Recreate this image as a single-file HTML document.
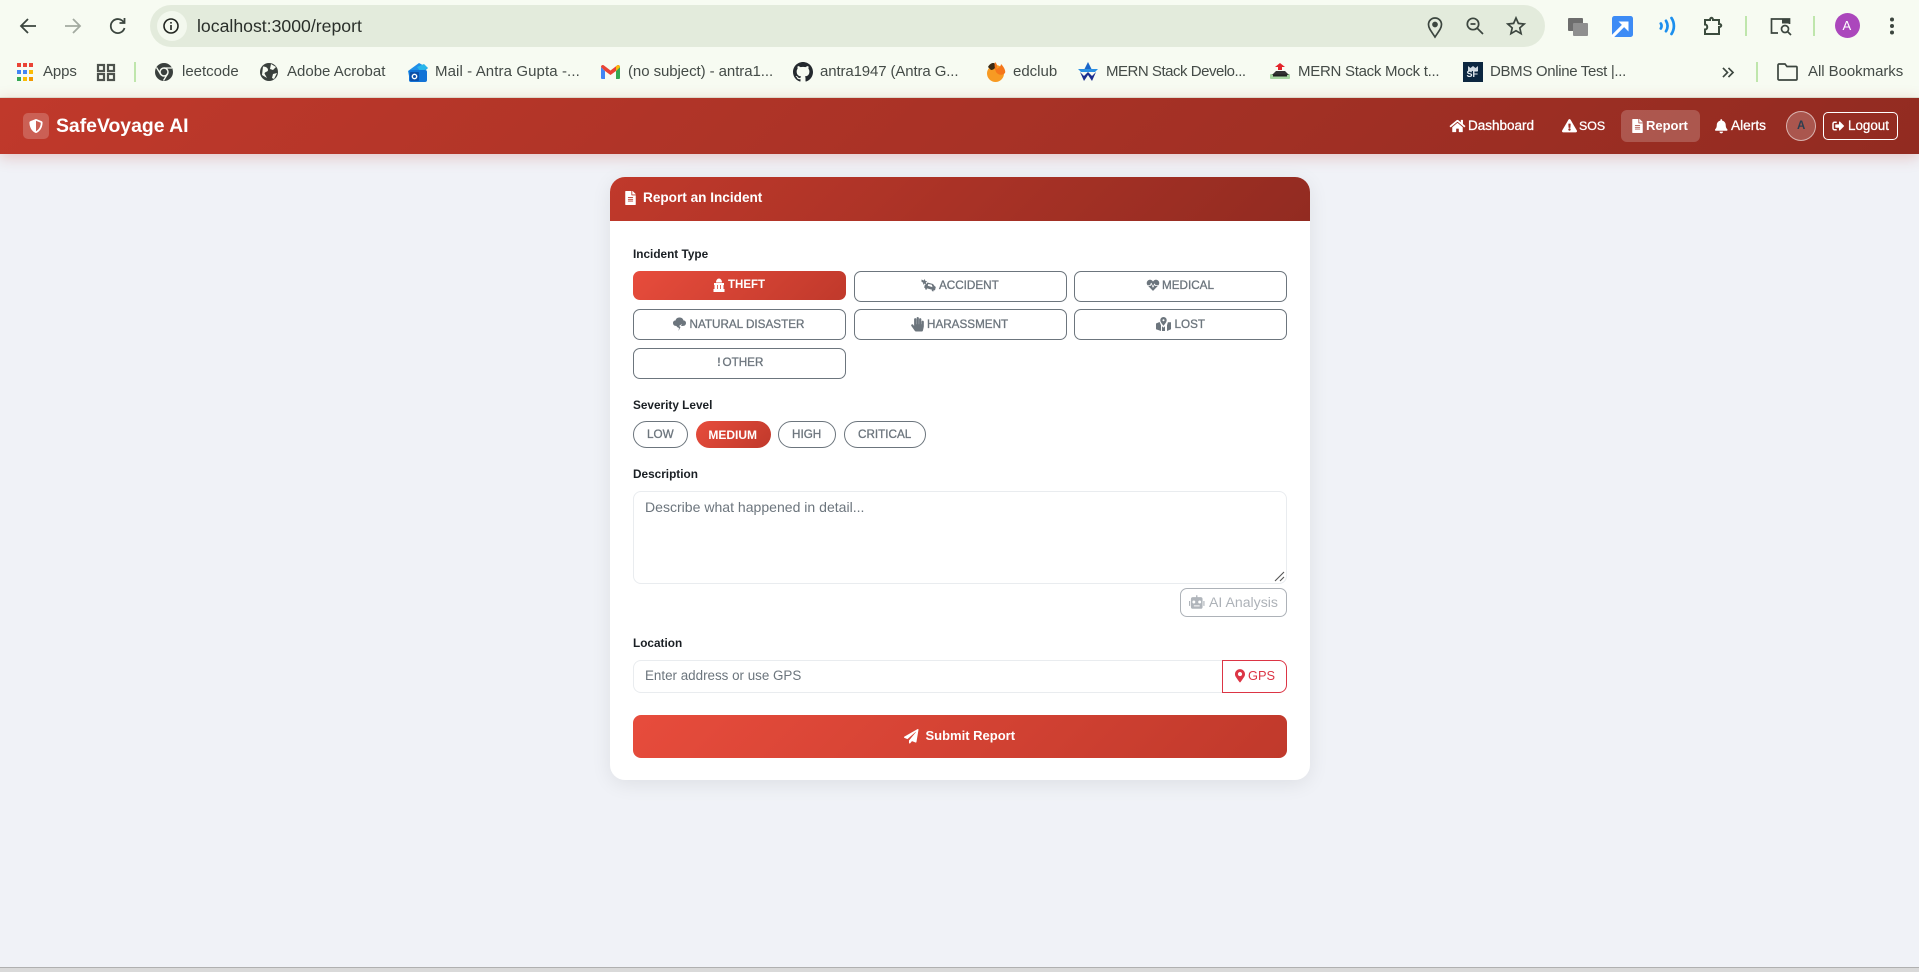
<!DOCTYPE html>
<html lang="en"><head><meta charset="utf-8"><title>SafeVoyage AI - Report</title>
<style>
*{box-sizing:border-box;margin:0;padding:0}
html,body{width:1919px;height:972px;overflow:hidden;background:#f0f2f7;font-family:"Liberation Sans",sans-serif}
.a,.t,svg.i{position:absolute}
.t{white-space:nowrap;height:20px;line-height:20px}
svg.i{display:block;overflow:visible}
.bm{font-size:15px;color:#444b47;top:62px}
#chrome{position:absolute;left:0;top:0;width:1919px;height:98px;background:#f7fbf2;border-bottom:1px solid #dfe6d8}
#omni{left:150px;top:5px;width:1395px;height:42px;border-radius:21px;background:#e3ebdc}
#nav{position:absolute;left:0;top:98px;width:1919px;height:56px;background:linear-gradient(135deg,#c0392b,#922b21);box-shadow:0 3px 14px rgba(192,57,43,.25)}
.n{color:#fff;font-size:13.5px;-webkit-text-stroke:.3px #fff}
#card{position:absolute;left:610px;top:177px;width:700px;height:603px;background:#fff;border-radius:15px;box-shadow:0 4px 20px rgba(0,0,0,.08)}
#ch{position:absolute;left:610px;top:177px;width:700px;height:44px;border-radius:15px 15px 0 0;background:linear-gradient(135deg,#c0392b,#922b21)}
.lb{font-size:11.8px;font-weight:bold;color:#1a1f24}
.b{position:absolute;border:1.5px solid #6c757d;background:#fff;border-radius:7px;width:213px;height:31px}
.bt{font-size:11.7px;color:#6c757d;-webkit-text-stroke:.3px #6c757d}
.p{position:absolute;top:421px;height:27px;border:1.2px solid #6c757d;border-radius:14px;background:#fff}
.act{background:linear-gradient(135deg,#e74c3c,#c0392b);border:0}
.ph{font-size:14.05px;color:#6c757d}
</style></head><body>

<div id="chrome"></div>
<div class="a" id="omni"></div>
<div class="a" style="left:157px;top:11px;width:30px;height:30px;border-radius:50%;background:#f3f8ee"></div>

<!-- toolbar left -->
<svg class="i" style="left:19px;top:17px" width="18" height="18" viewBox="0 0 18 18" fill="none" stroke="#3c463f" stroke-width="1.8"><path d="M17 9H2M9 2 2 9l7 7"/></svg>
<svg class="i" style="left:64px;top:17px" width="18" height="18" viewBox="0 0 18 18" fill="none" stroke="#a3aaa0" stroke-width="1.8"><path d="M1 9h15M9 2l7 7-7 7"/></svg>
<svg class="i" style="left:109px;top:17px" width="18" height="18" viewBox="0 0 18 18" fill="none" stroke="#3c463f" stroke-width="1.8"><path d="M15.500 11a7 7 0 1 1-.7-5.500"/><path d="M15.500 1v5h-5"/></svg>
<svg class="i" style="left:163px;top:18px" width="16" height="16" viewBox="0 0 16 16" fill="none" stroke="#20241f" stroke-width="1.6"><circle cx="8" cy="8" r="7"/><path d="M8 7v5M8 4v1.600"/></svg>
<span class="t" style="left:197px;top:16px;font-size:17.67px;color:#2a2f2a">localhost:3000/report</span>

<!-- toolbar right -->
<svg class="i" style="left:1427px;top:17px" width="16" height="21" viewBox="0 0 16 21" fill="none" stroke="#3c463f" stroke-width="1.7"><path d="M8 20C4 14 1.500 11 1.500 7.500a6.500 6.500 0 0 1 13 0C14.500 11 12 14 8 20z"/><circle cx="8" cy="7.500" r="2" fill="#3c463f"/></svg>
<svg class="i" style="left:1466px;top:17px" width="18" height="18" viewBox="0 0 18 18" fill="none" stroke="#3c463f" stroke-width="1.7"><circle cx="7" cy="7" r="5.700"/><path d="M4.500 7h5M11 11l6 6"/></svg>
<svg class="i" style="left:1506px;top:16px" width="20" height="20" viewBox="0 0 20 20" fill="none" stroke="#3c463f" stroke-width="1.7"><path d="M10 2l2.400 5.400 5.800.6-4.400 3.900 1.300 5.800L10 14.700l-5.100 3 1.300-5.800L1.800 8l5.800-.6z"/></svg>
<svg class="i" style="left:1568px;top:17px" width="20" height="20" viewBox="0 0 20 20"><rect x="0" y="1" width="15" height="13" rx="1" fill="#6d6d6d"/><rect x="5" y="6" width="15" height="13" rx="1" fill="#8f8f8f"/></svg>
<svg class="i" style="left:1612px;top:16px" width="21" height="21" viewBox="0 0 21 21"><rect width="21" height="21" rx="2.500" fill="#3d8bf5"/><path d="M0 21 14 7" stroke="#fff" stroke-width="3.200"/><path d="M6.500 5.500h10v10z" fill="#fff"/></svg>
<svg class="i" style="left:1659px;top:16px" width="17" height="20" viewBox="0 0 17 20" fill="none" stroke="#1c8fee" stroke-width="2.700" stroke-linecap="round"><path d="M1.800 7.500c1 1.600 1 3.400 0 5M7 4.800c2 3.300 2 7.100 0 10.400M12.500 2c3.200 5 3.200 11 0 16"/></svg>
<svg class="i" style="left:1703px;top:15px" width="20" height="21" viewBox="0 0 20 21" fill="none" stroke="#3c4c3e" stroke-width="2"><path d="M2 5h5c0-3 3-3 3 0h6v4c3 0 3 3 0 3v7H2v-4.500c3 0 3-5 0-5z"/></svg>
<div class="a" style="left:1745px;top:16px;width:2px;height:20px;background:#bfe6ac"></div>
<svg class="i" style="left:1770px;top:17px" width="22" height="20" viewBox="0 0 22 20" fill="none" stroke="#3c463f" stroke-width="1.700"><path d="M8 16H1.500V2h18v5"/><rect x="12" y="1.500" width="8" height="5" fill="#3c463f" stroke="none"/><circle cx="15" cy="12" r="3.500"/><path d="M17.500 14.500l3.500 3.500"/></svg>
<div class="a" style="left:1813px;top:16px;width:2px;height:20px;background:#bfe6ac"></div>
<div class="a" style="left:1835px;top:13px;width:25px;height:25px;border-radius:50%;background:#ab47bc"></div>
<span class="t" style="left:1842.500px;top:15.500px;font-size:13px;color:#fff">A</span>
<svg class="i" style="left:1889px;top:17px" width="6" height="18" viewBox="0 0 6 18" fill="#3c463f"><circle cx="3" cy="2.500" r="2"/><circle cx="3" cy="9" r="2"/><circle cx="3" cy="15.500" r="2"/></svg>

<!-- bookmarks -->
<svg class="i" style="left:17px;top:63px" width="16" height="18" viewBox="0 0 16 18"><g fill="#ea4335"><rect width="4" height="4"/><rect x="6" width="4" height="4"/><rect x="12" width="4" height="4"/></g><g fill="#4285f4"><rect y="7" width="4" height="4"/><rect x="6" y="7" width="4" height="4"/></g><rect x="12" y="7" width="4" height="4" fill="#fbbc05"/><rect y="14" width="4" height="4" fill="#34a853"/><rect x="6" y="14" width="4" height="4" fill="#fbbc05"/><rect x="12" y="14" width="4" height="4" fill="#f29900"/></svg>
<span class="t bm" style="left:43px;letter-spacing:-.1px">Apps</span>
<svg class="i" style="left:97px;top:64px" width="18" height="17" viewBox="0 0 18 17" fill="none" stroke="#4d524d" stroke-width="2.200"><rect x="1" y="1" width="6" height="6"/><rect x="11" y="1" width="6" height="6"/><rect x="1" y="10" width="6" height="6"/><rect x="11" y="10" width="6" height="6"/></svg>
<div class="a" style="left:134px;top:62px;width:2px;height:20px;background:#bfe6ac"></div>
<svg class="i" style="left:155px;top:63px" width="18" height="18" viewBox="0 0 18 18"><circle cx="9" cy="9" r="9" fill="#3a403d"/><circle cx="9" cy="9" r="4" fill="#3a403d" stroke="#f7fbf2" stroke-width="1.500"/><path d="M9 5h8M5.500 11 1.500 4.500M12.500 11 8.500 17.500" stroke="#f7fbf2" stroke-width="1.300"/></svg>
<span class="t bm" style="left:182px">leetcode</span>
<svg class="i" style="left:260px;top:63px" width="18" height="18" viewBox="0 0 18 18"><circle cx="9" cy="9" r="9" fill="#3a403d"/><path d="M3 3.500c3 0 5 1.500 5 3.500s-3 1.500-3.500 3.500L7 15 2 12zM11 1l5 3-3 3-3-1zM17 10l-3 6-2-1 1-4z" fill="#f7fbf2"/></svg>
<span class="t bm" style="left:287px">Adobe Acrobat</span>
<svg class="i" style="left:408px;top:62px" width="20" height="20" viewBox="0 0 20 20"><path d="M0 9 11 1l9 5-9 8H1z" fill="#1f8fe8"/><path d="M9 5l7-3 4 4-7 4z" fill="#28b5ea"/><rect x="1" y="8" width="18" height="12" rx="2" fill="#1273d6"/><rect x="2" y="10" width="9" height="9" rx="1" fill="#0c4fa8"/><circle cx="6.500" cy="14.500" r="2.200" fill="none" stroke="#fff" stroke-width="1.400"/></svg>
<span class="t bm" style="left:435px;letter-spacing:.1px">Mail - Antra Gupta -...</span>
<svg class="i" style="left:601px;top:65px" width="19" height="14" viewBox="0 0 19 14"><path d="M0 2v11a1 1 0 0 0 1 1h3V6z" fill="#4285f4"/><path d="M15 6v8h3a1 1 0 0 0 1-1V2z" fill="#34a853"/><path d="M0 2c0-2 2-2.500 3-1.500L9.500 5.500 16 .5c1-1 3-.5 3 1.500l-4 4-5.500 4L4 6z" fill="#ea4335"/><path d="M15 6l4-4c0-1.500-2-2.500-3-1.500L15 1.500z" fill="#fbbc05"/></svg>
<span class="t bm" style="left:628px;letter-spacing:-.07px">(no subject) - antra1...</span>
<svg class="i" style="left:793px;top:62px" width="20" height="20" viewBox="0 0 16 16"><path fill="#24292e" d="M8 0C3.580 0 0 3.580 0 8c0 3.540 2.290 6.530 5.470 7.590.4.070.55-.17.55-.38 0-.19-.01-.82-.01-1.490-2.010.37-2.530-.49-2.690-.94-.09-.23-.48-.94-.82-1.130-.28-.15-.68-.52-.01-.53.630-.01 1.080.58 1.230.82.720 1.210 1.870.870 2.330.660.070-.52.280-.870.510-1.070-1.780-.2-3.640-.89-3.640-3.950 0-.870.310-1.590.820-2.150-.080-.2-.360-1.020.080-2.120 0 0 .67-.210 2.200.820.640-.180 1.320-.270 2-.270s1.360.090 2 .270c1.530-1.040 2.200-.820 2.200-.820.440 1.100.160 1.920.080 2.120.510.560.820 1.270.820 2.150 0 3.070-1.870 3.750-3.650 3.950.290.250.540.730.540 1.480 0 1.070-.010 1.930-.010 2.200 0 .210.150.460.550.380A8.010 8.010 0 0 0 16 8c0-4.420-3.580-8-8-8z"/></svg>
<span class="t bm" style="left:820px;letter-spacing:-.12px">antra1947 (Antra G...</span>
<svg class="i" style="left:986px;top:62px" width="20" height="20" viewBox="0 0 20 20"><circle cx="9.500" cy="11.500" r="8.500" fill="#f79a23"/><path d="M2 5c2-4 6-5 7-3 2 3-1 6-4 6z" fill="#3a2a14"/><path d="M9 0c2 2 3 4 1 7 3-1 5-3 5-5 3 3 5 7 4 9-3 3-7 2-9-1-1-3-2-7-1-10z" fill="#f5761a"/></svg>
<span class="t bm" style="left:1013px">edclub</span>
<svg class="i" style="left:1078px;top:62px" width="20" height="20" viewBox="0 0 20 20" fill="none"><path d="M10 0 6.500 7h7z" fill="#1a66c9"/><path d="M0 7h20l-3 3H3z" fill="#2a8fe3"/><path d="M2 10l4 9 4-6 4 6 4-9-4 4-4-4-4 4z" fill="#1b2d8f"/></svg>
<span class="t bm" style="left:1106px;letter-spacing:-.48px">MERN Stack Develo...</span>
<svg class="i" style="left:1270px;top:63px" width="20" height="17" viewBox="0 0 20 17"><rect x="0" y="11" width="20" height="5" rx="1" fill="#a7d7a1"/><path d="M2 12l4-4h9l4 4z" fill="#333"/><path d="M8 7V4H5l5-4 5 4h-3v3z" fill="#e3242b"/><rect x="3" y="11.500" width="14" height="2" fill="#222"/></svg>
<span class="t bm" style="left:1298px;letter-spacing:-.27px">MERN Stack Mock t...</span>
<div class="a" style="left:1463px;top:62px;width:20px;height:20px;background:#0c2740"></div>
<svg class="i" style="left:1463px;top:62px" width="20" height="20" viewBox="0 0 20 20"><path d="M5 9V4l2.500 2L10 4l2.500 2L15 4v5z" fill="#cfd8df"/></svg>
<span class="t" style="left:1466.500px;top:63.500px;font-size:9px;color:#e6edf2;font-weight:bold">SF</span>
<span class="t bm" style="left:1490px;letter-spacing:-.33px">DBMS Online Test |...</span>
<svg class="i" style="left:1722px;top:67px" width="12" height="11" viewBox="0 0 13 12" fill="none" stroke="#3c463f" stroke-width="1.800"><path d="M1 1l5 5-5 5M7 1l5 5-5 5"/></svg>
<div class="a" style="left:1756px;top:62px;width:2px;height:20px;background:#bfe6ac"></div>
<svg class="i" style="left:1777px;top:63px" width="21" height="18" viewBox="0 0 21 18" fill="none" stroke="#3c463f" stroke-width="1.700"><path d="M1 2a1 1 0 0 1 1-1h6l2 2.500h9a1 1 0 0 1 1 1V16a1 1 0 0 1-1 1H2a1 1 0 0 1-1-1z"/></svg>
<span class="t bm" style="left:1808px;letter-spacing:-.05px">All Bookmarks</span>

<!-- app navbar -->
<div id="nav"></div>
<div class="a" style="left:23px;top:113px;width:26px;height:26px;border-radius:5px;background:rgba(255,255,255,.2)"></div>
<svg class="i" style="left:29px;top:119px" width="14" height="14" viewBox="0 0 512 512" fill="#fff"><path d="M466.500 83.700l-192-80a48.150 48.150 0 0 0-36.900 0l-192 80C27.700 91.100 16 108.600 16 128c0 198.500 114.500 335.700 221.500 380.300 11.800 4.900 25.100 4.900 36.900 0C360.100 472.600 496 349.300 496 128c0-19.400-11.700-36.900-29.500-44.300zM256.100 446.300l-.1-381 175.900 73.300c-3.300 151.400-82.100 261.100-175.800 307.700z"/></svg>
<span class="t" style="left:56px;top:116px;font-size:19.400px;font-weight:bold;color:#fff">SafeVoyage AI</span>

<svg class="i" style="left:1449px;top:119px" width="17" height="14" viewBox="0 0 576 512" fill="#fff"><path d="M280.370 148.260L96 300.110V464a16 16 0 0 0 16 16l112.060-.29a16 16 0 0 0 15.920-16V368a16 16 0 0 1 16-16h64a16 16 0 0 1 16 16v95.640a16 16 0 0 0 16 16.050L464 480a16 16 0 0 0 16-16V300L295.670 148.260a12.190 12.190 0 0 0-15.300 0zM571.600 251.470L488 182.560V44.050a12 12 0 0 0-12-12h-56a12 12 0 0 0-12 12v72.610L318.470 43a48 48 0 0 0-61 0L4.340 251.470a12 12 0 0 0-1.600 16.900l25.500 31A12 12 0 0 0 45.150 301l235.220-193.740a12.190 12.190 0 0 1 15.300 0L530.900 301a12 12 0 0 0 16.900-1.600l25.500-31a12 12 0 0 0-1.700-16.930z"/></svg>
<span class="t n" style="left:1468px;top:116px">Dashboard</span>
<svg class="i" style="left:1562px;top:119px" width="15" height="13.500" viewBox="0 0 576 512" fill="#fff"><path d="M569.517 440.013C587.975 472.007 564.806 512 527.940 512H48.054c-36.937 0-59.999-40.055-41.577-71.987L246.423 23.985c18.467-32.009 64.720-31.951 83.154 0l239.940 416.028zM288 354c-25.405 0-46 20.595-46 46s20.595 46 46 46 46-20.595 46-46-20.595-46-46-46zm-43.673-165.346l7.418 136c.347 6.364 5.609 11.346 11.982 11.346h48.546c6.373 0 11.635-4.982 11.982-11.346l7.418-136c.375-6.874-5.098-12.654-11.982-12.654h-63.383c-6.884 0-12.356 5.780-11.981 12.654z"/></svg>
<span class="t n" style="left:1579px;top:116px;font-size:12.400px">SOS</span>
<div class="a" style="left:1621px;top:110px;width:79px;height:32px;border-radius:6px;background:rgba(255,255,255,.2)"></div>
<svg class="i" style="left:1632px;top:119px" width="11" height="14" viewBox="0 0 384 512" fill="#fff"><path d="M224 136V0H24C10.700 0 0 10.700 0 24v464c0 13.300 10.700 24 24 24h336c13.300 0 24-10.700 24-24V160H248c-13.200 0-24-10.800-24-24zm64 236c0 6.600-5.400 12-12 12H108c-6.600 0-12-5.400-12-12v-8c0-6.600 5.400-12 12-12h168c6.600 0 12 5.400 12 12v8zm0-64c0 6.600-5.400 12-12 12H108c-6.600 0-12-5.400-12-12v-8c0-6.600 5.400-12 12-12h168c6.600 0 12 5.400 12 12v8zm0-72v8c0 6.600-5.400 12-12 12H108c-6.600 0-12-5.400-12-12v-8c0-6.600 5.400-12 12-12h168c6.600 0 12 5.400 12 12zm96-114.100v6.100H256V0h6.100c6.400 0 12.500 2.500 17 7l97.900 98c4.500 4.500 7 10.600 7 16.900z"/></svg>
<span class="t" style="left:1646px;top:116px;font-size:13px;font-weight:bold;color:#fff">Report</span>
<svg class="i" style="left:1715px;top:119px" width="12.500" height="14.500" viewBox="0 0 448 512" fill="#fff"><path d="M224 512c35.320 0 63.970-28.650 63.970-64H160.030c0 35.350 28.650 64 63.970 64zm215.390-149.710c-19.320-20.760-55.470-51.990-55.470-154.290 0-77.700-54.480-139.900-127.940-155.160V32c0-17.670-14.320-32-31.980-32s-31.980 14.330-31.980 32v20.840C118.560 68.100 64.080 130.300 64.080 208c0 102.300-36.150 133.530-55.470 154.290-6 6.450-8.660 14.160-8.610 21.710.11 16.400 12.980 32 32.100 32h383.800c19.120 0 32-15.600 32.100-32 .05-7.550-2.610-15.270-8.610-21.710z"/></svg>
<span class="t n" style="left:1731px;top:116px;font-size:13.700px">Alerts</span>
<div class="a" style="left:1786px;top:111px;width:30px;height:30px;border-radius:50%;background:rgba(255,255,255,.2);border:1px solid rgba(255,255,255,.55)"></div>
<span class="t" style="left:1797px;top:116px;font-size:11.500px;font-weight:bold;color:#2c3e50">A</span>
<div class="a" style="left:1823px;top:112px;width:75px;height:28px;border-radius:5px;border:1.500px solid #fff"></div>
<svg class="i" style="left:1832px;top:120px" width="12.500" height="12" viewBox="0 0 512 512" fill="#fff"><path d="M497 273L329 441c-15 15-41 4.500-41-17v-96H152c-13.300 0-24-10.700-24-24v-96c0-13.300 10.700-24 24-24h136V88c0-21.400 25.900-32 41-17l168 168c9.300 9.400 9.300 24.600 0 34zM192 436v-40c0-6.600-5.400-12-12-12H96c-17.700 0-32-14.300-32-32V160c0-17.700 14.300-32 32-32h84c6.600 0 12-5.400 12-12V76c0-6.600-5.400-12-12-12H96c-53 0-96 43-96 96v192c0 53 43 96 96 96h84c6.600 0 12-5.400 12-12z"/></svg>
<span class="t n" style="left:1848px;top:116px;font-size:13.400px">Logout</span>

<!-- card -->
<div id="card"></div>
<div id="ch"></div>
<svg class="i" style="left:625px;top:191px" width="11" height="14" viewBox="0 0 384 512" fill="#fff"><path d="M224 136V0H24C10.700 0 0 10.700 0 24v464c0 13.300 10.700 24 24 24h336c13.300 0 24-10.700 24-24V160H248c-13.200 0-24-10.800-24-24zm64 236c0 6.600-5.400 12-12 12H108c-6.600 0-12-5.400-12-12v-8c0-6.600 5.400-12 12-12h168c6.600 0 12 5.400 12 12v8zm0-64c0 6.600-5.400 12-12 12H108c-6.600 0-12-5.400-12-12v-8c0-6.600 5.400-12 12-12h168c6.600 0 12 5.400 12 12v8zm0-72v8c0 6.600-5.400 12-12 12H108c-6.600 0-12-5.400-12-12v-8c0-6.600 5.400-12 12-12h168c6.600 0 12 5.400 12 12zm96-114.100v6.100H256V0h6.100c6.400 0 12.500 2.500 17 7l97.900 98c4.500 4.500 7 10.600 7 16.900z"/></svg>
<span class="t" style="left:643px;top:188px;font-size:13.600px;font-weight:bold;color:#fff">Report an Incident</span>

<span class="t lb" style="left:633px;top:244px">Incident Type</span>
<div class="a act" style="left:633px;top:271px;width:213px;height:29px;border-radius:7px"></div>
<svg class="i" style="left:713px;top:278px" width="12" height="14" viewBox="0 0 12 14" fill="#fff"><path d="M3 4.500C3 2 4.500.5 6 .5S9 2 9 4.500zM1 5h10v2H1zM1.500 7h2.500v4.500H1.500zM4.800 7h2.400v4.500H4.800zM8 7h2.500v4.500H8zM.5 11h11v3H.5z"/></svg>
<span class="t" style="left:728px;top:275px;font-size:11.500px;font-weight:bold;color:#fff">THEFT</span>

<div class="b" style="left:853.500px;top:271px"></div>
<svg class="i" style="left:921px;top:279px" width="15" height="13" viewBox="0 0 15 13" fill="#6c757d"><path d="M.5.5l2.200 1L3.800 0l.6 2 1.800.3L4.800 3.600l.5 1.600-1.700-.6L2 5.800l.2-2L.5 2.800z"/><path d="M6.500 3.500l5.500 1.500 1.500 2 1.300 1-.8 3.400-1.300-.3-.3 1.400-1.700-.5.3-1.300-5-1.300-.3 1.300L4 10.300l.3-1.300-1.200-.4.800-3 1.500-.6zM7.300 5 6.700 6.800l4.800 1.300-.7-2.300z" fill-rule="evenodd"/></svg>
<span class="t bt" style="left:939px;top:276px">ACCIDENT</span>
<div class="b" style="left:1074px;top:271px"></div>
<svg class="i" style="left:1146px;top:279px" width="14" height="12.500" viewBox="0 0 512 512" fill="#6c757d"><path d="M320.200 243.800l-49.700 99.400c-6 12.100-23.400 11.700-28.900-.6l-56.900-126.300-30 71.700H60.600l182.500 186.500c7.100 7.300 18.600 7.300 25.700 0L451.400 288H342.300l-22.100-44.200zM473.700 73.900l-2.400-2.500c-51.500-52.600-135.800-52.600-187.400 0L256 100l-27.900-28.500c-51.500-52.700-135.900-52.700-187.400 0l-2.400 2.400C-10.400 123.700-12.500 203 31 256h102.400l35.900-86.200c5.400-12.900 23.600-13.200 29.400-.4l58.200 129.300 49-97.900c5.900-11.800 22.700-11.800 28.600 0l27.600 55.200H481c43.500-53 41.400-132.300-7.300-182.100z"/></svg>
<span class="t bt" style="left:1162px;top:276px">MEDICAL</span>

<div class="b" style="left:633px;top:309px"></div>
<svg class="i" style="left:673px;top:316.500px" width="13" height="14" viewBox="0 0 13 14" fill="#6c757d"><path d="M3.500 9C1 9 0 7.500 0 6s1-2.500 2.500-2.500C3 1.500 4.500.5 6.500.5S10 1.500 10.500 3.500C12 3.500 13 4.500 13 6s-1 3-3.500 3H8L9 7 6 9 7.500 10 5.500 14 6 11 4 10z"/></svg>
<span class="t bt" style="left:689.500px;top:314.500px">NATURAL DISASTER</span>
<div class="b" style="left:853.500px;top:309px"></div>
<svg class="i" style="left:911px;top:317px" width="13" height="14.500" viewBox="0 0 448 512" fill="#6c757d"><path d="M408.781 128.007C386.356 127.578 368 146.360 368 168.790V256h-8V79.790c0-22.430-18.356-41.212-40.781-40.783C297.488 39.423 280 57.169 280 79v177h-8V40.790C272 18.360 253.644-.422 231.219.007 209.488.423 192 18.169 192 40v216h-8V80.790c0-22.430-18.356-41.212-40.781-40.783C121.488 40.423 104 58.169 104 80v235.992l-31.648-43.519c-12.993-17.866-38.009-21.817-55.877-8.823-17.865 12.994-21.815 38.010-8.822 55.877l125.601 172.705A48 48 0 0 0 172.073 512h197.590c22.274 0 41.622-15.324 46.724-37.006l26.508-112.660a192.011 192.011 0 0 0 5.104-43.975V168c.001-21.831-17.487-39.577-39.218-39.993z"/></svg>
<span class="t bt" style="left:927px;top:314.500px">HARASSMENT</span>
<div class="b" style="left:1074px;top:309px"></div>
<svg class="i" style="left:1156px;top:317px" width="15" height="14" viewBox="0 0 15 14" fill="#6c757d"><path fill-rule="evenodd" d="M7.500 0a3.200 3.200 0 0 1 3.200 3.200C10.700 5 8.500 7.500 7.500 8.800 6.500 7.500 4.300 5 4.300 3.200A3.200 3.200 0 0 1 7.500 0zm0 2.200a1 1 0 1 0 0 2 1 1 0 0 0 0-2z"/><path d="M0 6.500 3.600 5l1.400 3.300V14l-5-1.800zM15 5.200v7l-4 1.800V8.300l.9-3zM6 9.200l1.500 1.400L9 9.200V14H6z"/></svg>
<span class="t bt" style="left:1174.500px;top:314.500px">LOST</span>

<div class="b" style="left:633px;top:348px"></div>
<span class="t bt" style="left:717px;top:352.500px;font-weight:bold;-webkit-text-stroke:0">!</span>
<span class="t bt" style="left:722.500px;top:352.500px">OTHER</span>

<span class="t lb" style="left:633px;top:395px">Severity Level</span>
<div class="p" style="left:633px;width:55px"></div>
<span class="t bt" style="left:647px;top:424.500px">LOW</span>
<div class="p act" style="left:696px;width:75px"></div>
<span class="t" style="left:708.400px;top:424.500px;font-size:12px;font-weight:bold;color:#fff">MEDIUM</span>
<div class="p" style="left:778px;width:58px"></div>
<span class="t bt" style="left:792px;top:424.500px">HIGH</span>
<div class="p" style="left:844px;width:82px"></div>
<span class="t bt" style="left:858px;top:424.500px">CRITICAL</span>

<span class="t lb" style="left:633px;top:464px">Description</span>
<div class="a" style="left:633px;top:491px;width:654px;height:93px;border:1.200px solid #e9ecef;border-radius:8px;background:#fff"></div>
<span class="t ph" style="left:645px;top:497px">Describe what happened in detail...</span>
<svg class="i" style="left:1274px;top:571px" width="11" height="11" viewBox="0 0 11 11" fill="none" stroke="#555" stroke-width="1.100"><path d="M1 10 10 1M6 10l4-4"/></svg>

<div class="a" style="left:1180px;top:588px;width:107px;height:29px;border:1.300px solid #adb2b8;border-radius:7px"></div>
<svg class="i" style="left:1189px;top:594.500px" width="15.500" height="14" viewBox="0 0 16 14" fill="#b0b5bb"><path d="M7.300 0h1.400v2H12a2 2 0 0 1 2 2v8a2 2 0 0 1-2 2H4a2 2 0 0 1-2-2V4a2 2 0 0 1 2-2h3.300zM5 5.500a1.500 1.500 0 1 0 0 3 1.500 1.500 0 0 0 0-3zm6 0a1.500 1.500 0 1 0 0 3 1.500 1.500 0 0 0 0-3zM5 10.500v1h6v-1zM0 6h1.200v5H0zM14.800 6H16v5h-1.200z"/></svg>
<span class="t" style="left:1209px;top:591.500px;font-size:14.100px;color:#adb2b8">AI Analysis</span>

<span class="t lb" style="left:633px;top:633px">Location</span>
<div class="a" style="left:633px;top:660px;width:590px;height:33px;border:1.200px solid #e9ecef;border-right:0;border-radius:8px 0 0 8px;background:#fff"></div>
<span class="t ph" style="left:645px;top:666px;font-size:13.400px">Enter address or use GPS</span>
<div class="a" style="left:1222px;top:660px;width:65px;height:33px;border:1.200px solid #dc3545;border-radius:0 8px 8px 0;background:#fff"></div>
<svg class="i" style="left:1234.500px;top:669px" width="10" height="13.500" viewBox="0 0 384 512" fill="#dc3545"><path d="M172.268 501.670C26.970 291.031 0 268.413 0 192 0 85.961 85.961 0 192 0s192 85.961 192 192c0 76.413-26.970 99.031-172.268 309.670-9.535 13.774-29.930 13.773-39.464 0zM192 272c44.183 0 80-35.817 80-80s-35.817-80-80-80-80 35.817-80 80 35.817 80 80 80z"/></svg>
<span class="t" style="left:1248px;top:666px;font-size:12.800px;color:#dc3545">GPS</span>

<div class="a" style="left:633px;top:715px;width:654px;height:43px;border-radius:8px;background:linear-gradient(135deg,#e74c3c,#c0392b)"></div>
<svg class="i" style="left:904px;top:729px" width="14.500" height="14.500" viewBox="0 0 512 512" fill="#fff"><path d="M476 3.200L12.500 270.600c-18.100 10.400-15.800 35.600 2.200 43.200L121 358.400l287.300-253.200c5.500-4.900 13.300 2.600 8.600 8.300L176 407v80.500c0 23.600 28.500 32.900 42.500 15.800L282 426l124.600 52.200c14.200 6 30.400-2.900 33-18.200l72-432C515 7.800 493.300-6.800 476 3.200z"/></svg>
<span class="t" style="left:925.500px;top:725.500px;font-size:13px;font-weight:bold;color:#fff">Submit Report</span>

<!-- bottom strip -->
<div class="a" style="left:0;top:967px;width:1919px;height:5px;background:#d9d9d9;border-top:1px solid #b0b0b0"></div>
</body></html>
